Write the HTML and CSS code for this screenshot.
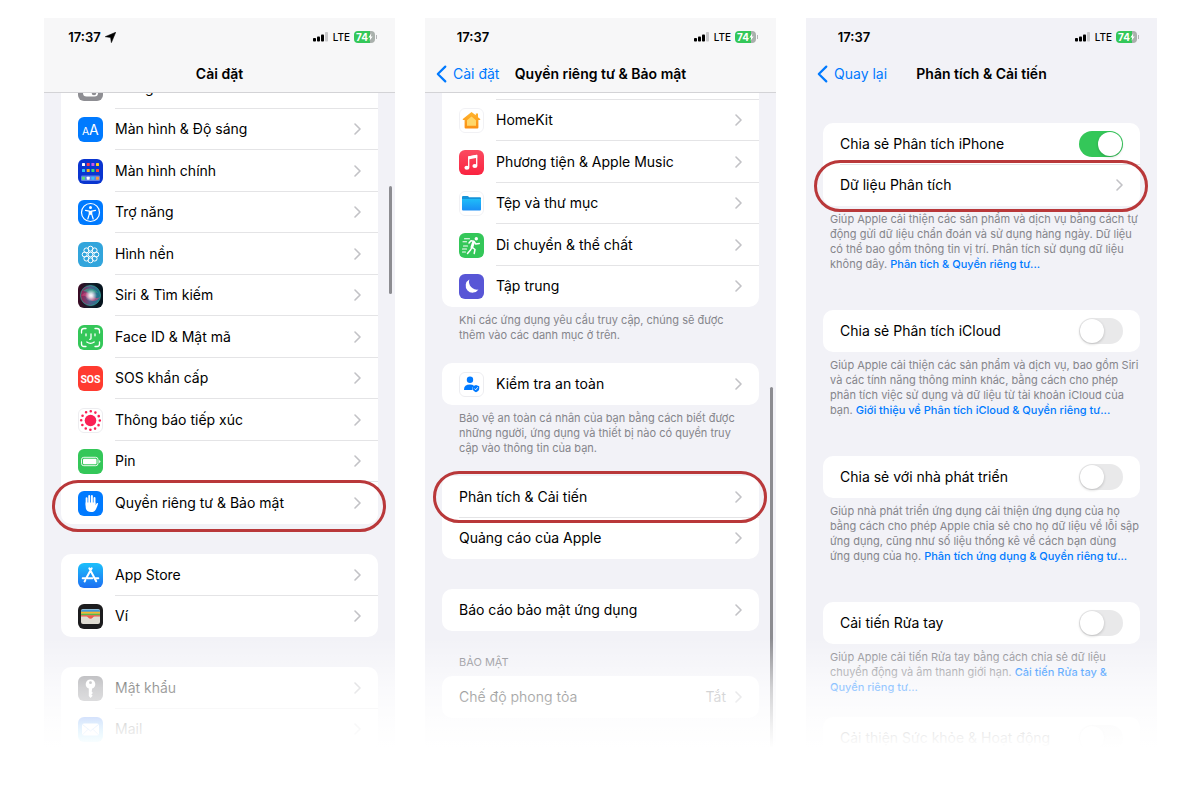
FILE: index.html
```html
<!DOCTYPE html>
<html lang="vi">

<head>
  <meta charset="UTF-8">
  <meta name="viewport" content="width=device-width, initial-scale=1">
  <title>Cài đặt</title>
  <link rel="stylesheet" href="styles.css">
</head>

<body>
  <!-- shared icons -->
  <svg class="defs" width="0" height="0" aria-hidden="true">
    <defs>
      <linearGradient id="store" x1="0" y1="0" x2="0" y2="1">
        <stop offset="0" stop-color="#1cc0fb" />
        <stop offset="1" stop-color="#1d6ff2" />
      </linearGradient>
      <linearGradient id="mail" x1="0" y1="0" x2="0" y2="1">
        <stop offset="0" stop-color="#1d62f0" />
        <stop offset="1" stop-color="#19d0fb" />
      </linearGradient>
      <linearGradient id="home" x1="0" y1="0" x2="0" y2="1">
        <stop offset="0" stop-color="#ffb52e" />
        <stop offset="1" stop-color="#fb8f14" />
      </linearGradient>
      <linearGradient id="music" x1="0" y1="0" x2="0" y2="1">
        <stop offset="0" stop-color="#fb4a60" />
        <stop offset="1" stop-color="#fa2340" />
      </linearGradient>
      <linearGradient id="folder" x1="0" y1="0" x2="0" y2="1">
        <stop offset="0" stop-color="#1fbdf8" />
        <stop offset="1" stop-color="#1a8ef5" />
      </linearGradient>
      <linearGradient id="siri" x1="0" y1="0" x2="1" y2="0">
        <stop offset="0" stop-color="#c01f5c" />
        <stop offset="0.45" stop-color="#6f6fa8" />
        <stop offset="1" stop-color="#14a0b4" />
      </linearGradient>
      <linearGradient id="siri-bg" x1="0" y1="0" x2="1" y2="0">
        <stop offset="0" stop-color="#3a0a24" />
        <stop offset="0.5" stop-color="#12202c" />
        <stop offset="1" stop-color="#04121c" />
      </linearGradient>
      <radialGradient id="glow">
        <stop offset="0" stop-color="#fff" />
        <stop offset="0.3" stop-color="#fff" stop-opacity="0.8" />
        <stop offset="1" stop-color="#fff" stop-opacity="0" />
      </radialGradient>
    </defs>
    <symbol id="chevron" viewBox="0 0 7 12">
      <path d="M1 1l5 5-5 5" fill="none" stroke="#c2c2c6" stroke-width="1.6" stroke-linecap="round" stroke-linejoin="round" />
    </symbol>
    <symbol id="back" viewBox="0 0 11 18">
      <path d="M9.3 1.6L1.8 9l7.5 7.4" fill="none" stroke="#007aff" stroke-width="2.2" stroke-linecap="round" stroke-linejoin="round" />
    </symbol>
    <symbol id="signal" viewBox="0 0 16 10">
      <rect x="0" y="6" width="3" height="3.5" rx="0.8" />
      <rect x="4" y="4.5" width="3" height="5" rx="0.8" />
      <rect x="8" y="2.5" width="3" height="7" rx="0.8" />
      <rect x="12" y="0" width="3" height="9.5" rx="0.8" fill="#c8c8ca" />
    </symbol>
    <symbol id="bolt" viewBox="0 0 6 9">
      <path d="M4 0L0.4 5h2.2L1.8 9l3.8-5.2H3.4z" fill="#fff" />
    </symbol>
  </svg>

  <main class="screens">

    <!-- Cài đặt -->
    <section class="screen">
      <header class="topbar">
        <div class="status">
          <div class="clock">17:37
            <svg width="11" height="11" viewBox="0 0 11 11"><path d="M10.7 0.3L6.4 10.6 5.6 5.4 0.3 4.7z" stroke="#000" stroke-width="0.6" stroke-linejoin="round" /></svg>
          </div>
          <div class="signal">
            <svg width="16" height="10"><use href="#signal" /></svg>
            <span class="lte">LTE</span>
            <span class="battery">74<svg width="5" height="8"><use href="#bolt" /></svg></span>
          </div>
        </div>
        <div class="navbar">
          <h1 class="title">Cài đặt</h1>
        </div>
      </header>
      <div class="content">
        <nav class="card card-scrolled">
          <a class="row" href="#">
            <svg class="icon" viewBox="0 0 25 25"><rect width="25" height="25" rx="6" fill="#8e8e93" /><rect x="5" y="13.500" width="15" height="7" rx="3.500" fill="#fff" /><circle cx="16" cy="17" r="2.300" fill="#8e8e93" /></svg>
            <span class="row-body">Trung tâm điều khiển</span>
          </a>
          <a class="row" href="#">
            <svg class="icon" viewBox="0 0 25 25"><rect width="25" height="25" rx="6" fill="#007aff" /><text x="4" y="18" font-family="Inter, sans-serif" font-size="10.500" fill="#fff">A</text><text x="11" y="18" font-family="Inter, sans-serif" font-size="14" fill="#fff">A</text></svg>
            <span class="row-body">Màn hình &amp; Độ sáng<svg class="chevron"><use href="#chevron" /></svg></span>
          </a>
          <a class="row" href="#">
            <svg class="icon" viewBox="0 0 25 25">
              <rect width="25" height="25" rx="6" fill="#0a35d0" />
              <rect x="3" y="16.500" width="19" height="5.500" rx="1.200" fill="#5f80e6" />
              <g fill="#fff"><rect x="4" y="4" width="3" height="3" rx=".6" /><rect x="8.700" y="17.700" width="3" height="3" rx=".6" /></g>
              <rect x="8.700" y="4" width="3" height="3" rx=".6" fill="#ff3b4e" />
              <rect x="13.400" y="4" width="3" height="3" rx=".6" fill="#c857e8" />
              <rect x="18" y="4" width="3" height="3" rx=".6" fill="#ffd21c" />
              <rect x="4" y="10" width="3" height="3" rx=".6" fill="#2fc5f5" />
              <rect x="8.700" y="10" width="3" height="3" rx=".6" fill="#ffb01c" />
              <rect x="13.400" y="10" width="3" height="3" rx=".6" fill="#3fdc6b" />
              <rect x="18" y="10" width="3" height="3" rx=".6" fill="#ff4a3b" />
              <rect x="4" y="17.700" width="3" height="3" rx=".6" fill="#59e07c" />
              <rect x="13.400" y="17.700" width="3" height="3" rx=".6" fill="#35c3f8" />
              <rect x="18" y="17.700" width="3" height="3" rx=".6" fill="#f79a3c" />
            </svg>
            <span class="row-body">Màn hình chính<svg class="chevron"><use href="#chevron" /></svg></span>
          </a>
          <a class="row" href="#">
            <svg class="icon" viewBox="0 0 25 25"><rect width="25" height="25" rx="6" fill="#007aff" /><circle cx="12.500" cy="12.500" r="9" fill="none" stroke="#fff" stroke-width="1.200" /><circle cx="12.500" cy="7.600" r="1.500" fill="#fff" /><path d="M7.500 10.300l3.800.8v3L9.800 19M17.500 10.300l-3.800.8v3l1.500 4.900" fill="none" stroke="#fff" stroke-width="1.200" stroke-linecap="round" stroke-linejoin="round" /><path d="M11 10.800h3v4h-3z" fill="#fff" /></svg>
            <span class="row-body">Trợ năng<svg class="chevron"><use href="#chevron" /></svg></span>
          </a>
          <a class="row" href="#">
            <svg class="icon" viewBox="0 0 25 25">
              <rect width="25" height="25" rx="6" fill="#32a5dc" />
              <g fill="none" stroke="#fff" stroke-width="1">
                <circle cx="12.500" cy="12.500" r="2.300" />
                <circle cx="12.500" cy="6.700" r="2.500" /><circle cx="16.600" cy="8.400" r="2.500" />
                <circle cx="18.300" cy="12.500" r="2.500" /><circle cx="16.600" cy="16.600" r="2.500" />
                <circle cx="12.500" cy="18.300" r="2.500" /><circle cx="8.400" cy="16.600" r="2.500" />
                <circle cx="6.700" cy="12.500" r="2.500" /><circle cx="8.400" cy="8.400" r="2.500" />
              </g>
            </svg>
            <span class="row-body">Hình nền<svg class="chevron"><use href="#chevron" /></svg></span>
          </a>
          <a class="row" href="#">
            <svg class="icon" viewBox="0 0 25 25"><rect width="25" height="25" rx="6" fill="url(#siri-bg)" /><circle cx="12.500" cy="12.500" r="10" fill="url(#siri)" opacity=".75" /><circle cx="12.500" cy="12.500" r="10" fill="none" stroke="#3aa39a" stroke-width=".8" /><path d="M3 13c4-5 7-4 10-1s6 4 9 2c-3 5-8 5-11 2s-5-4-8-3z" fill="#d8447c" opacity=".6" /><path d="M5 8c5-4 12-3 15 2-4-1-6 0-8 2-2-3-4-4-7-4z" fill="#35b38c" opacity=".6" /><circle cx="13" cy="12.500" r="6" fill="url(#glow)" /></svg>
            <span class="row-body">Siri &amp; Tìm kiếm<svg class="chevron"><use href="#chevron" /></svg></span>
          </a>
          <a class="row" href="#">
            <svg class="icon" viewBox="0 0 25 25"><rect width="25" height="25" rx="6" fill="#34c759" /><g fill="none" stroke="#fff" stroke-width="1.300" stroke-linecap="round"><path d="M3.500 8V6Q3.500 3.500 6 3.500h2M17 3.500h2q2.500 0 2.500 2.500v2M21.500 17v2q0 2.500-2.500 2.500h-2M8 21.500H6q-2.500 0-2.500-2.500v-2" /><path d="M8 9v1.800M17 9v1.800M13 9v4.500q0 .8-1.300.8M8.800 17q3.700 2.600 7.400 0" /></g></svg>
            <span class="row-body">Face ID &amp; Mật mã<svg class="chevron"><use href="#chevron" /></svg></span>
          </a>
          <a class="row" href="#">
            <svg class="icon" viewBox="0 0 25 25"><rect width="25" height="25" rx="6" fill="#ff3b30" /><text x="12.500" y="16.700" text-anchor="middle" font-family="Roboto, sans-serif" font-size="10.500" font-weight="700" fill="#fff">SOS</text></svg>
            <span class="row-body">SOS khẩn cấp<svg class="chevron"><use href="#chevron" /></svg></span>
          </a>
          <a class="row" href="#">
            <svg class="icon" viewBox="0 0 25 25"><rect x=".5" y=".5" width="24" height="24" rx="5.500" fill="#fff" stroke="#ededf0" /><circle cx="12.500" cy="12.500" r="5.800" fill="#fb2055" /><circle cx="12.500" cy="12.500" r="9.300" fill="none" stroke="#fb2055" stroke-width="2.600" stroke-linecap="round" stroke-dasharray="0 4.869" /></svg>
            <span class="row-body">Thông báo tiếp xúc<svg class="chevron"><use href="#chevron" /></svg></span>
          </a>
          <a class="row" href="#">
            <svg class="icon" viewBox="0 0 25 25"><rect width="25" height="25" rx="6" fill="#34c759" /><rect x="3.500" y="8.300" width="16.500" height="8.400" rx="2.300" fill="none" stroke="#fff" stroke-width=".9" /><rect x="5" y="9.800" width="13.500" height="5.400" rx="1" fill="#fff" /><path d="M21.200 11v3q1.200-.5 1.200-1.500t-1.200-1.500z" fill="#fff" /></svg>
            <span class="row-body">Pin<svg class="chevron"><use href="#chevron" /></svg></span>
          </a>
          <a class="row" href="#">
            <svg class="icon" viewBox="0 0 25 25"><rect width="25" height="25" rx="6" fill="#007aff" /><path d="M8.600 14V7.200M11.200 12V5M13.900 12V5M16.500 13V7" fill="none" stroke="#fff" stroke-width="1.900" stroke-linecap="round" /><path d="M7.650 11.500h9.800v2.700l1-1.700q.8-1 1.700-.3-.7 3.200-2.200 6-1.500 2.900-4.800 2.900-5.500 0-5.500-5.600z" fill="#fff" /></svg>
            <span class="row-body">Quyền riêng tư &amp; Bảo mật<svg class="chevron"><use href="#chevron" /></svg></span>
            <span class="ring ring-low"></span>
          </a>
        </nav>

        <nav class="card">
          <a class="row" href="#">
            <svg class="icon" viewBox="0 0 25 25"><rect width="25" height="25" rx="6" fill="url(#store)" /><path d="M11.300 5.300l6.900 13M13.700 5.300L8.200 15.200M7.300 17.200l-.7 1.200M4.700 15.300h9.600M17.200 15.300h3.100" fill="none" stroke="#fff" stroke-width="2" stroke-linecap="round" /></svg>
            <span class="row-body">App Store<svg class="chevron"><use href="#chevron" /></svg></span>
          </a>
          <a class="row" href="#">
            <svg class="icon" viewBox="0 0 25 25"><rect width="25" height="25" rx="6" fill="#1c1c1e" /><rect x="3" y="5" width="19" height="15" rx="2" fill="#dfdcd3" /><path d="M3 8V7q0-1.500 1.500-1.500h16Q22 5.500 22 7v1z" fill="#3f9bd9" /><path d="M3 7.700h19v2H3z" fill="#f6b42c" /><path d="M3 9.600h19v2H3z" fill="#5cb947" /><path d="M3 11.300h19v1.300h-5.500q-1 0-1.600.9-2.400 2.400-4.800 0-.6-.9-1.600-.9H3z" fill="#ee5b4f" /></svg>
            <span class="row-body">Ví<svg class="chevron"><use href="#chevron" /></svg></span>
          </a>
        </nav>

        <nav class="card">
          <a class="row" href="#">
            <svg class="icon" viewBox="0 0 25 25"><rect width="25" height="25" rx="6" fill="#8e8e93" /><path d="M12.500 3.500a4.700 4.700 0 0 0-1.700 9.100V20l1.700 2 2.200-2.200-1.300-1.300 1.500-1.600-1.200-1.300.5-3A4.700 4.700 0 0 0 12.500 3.500z" fill="#fff" /><circle cx="12.500" cy="6.700" r="1.400" fill="#8e8e93" /></svg>
            <span class="row-body">Mật khẩu<svg class="chevron"><use href="#chevron" /></svg></span>
          </a>
          <a class="row" href="#">
            <svg class="icon" viewBox="0 0 25 25"><rect width="25" height="25" rx="6" fill="url(#mail)" /><rect x="4" y="6.500" width="17" height="12" rx="2" fill="#fff" /><path d="M4.500 7.500l8 6.500 8-6.500M4.500 17.800l5.500-5.500M20.500 17.800L15 12.300" fill="none" stroke="#3c8ff5" stroke-width=".8" /></svg>
            <span class="row-body">Mail<svg class="chevron"><use href="#chevron" /></svg></span>
          </a>
        </nav>
      </div>
      <div class="thumb thumb-settings"></div>
    </section>

    <!-- Quyền riêng tư & Bảo mật -->
    <section class="screen">
      <header class="topbar">
        <div class="status">
          <div class="clock">17:37</div>
          <div class="signal">
            <svg width="16" height="10"><use href="#signal" /></svg>
            <span class="lte">LTE</span>
            <span class="battery">74<svg width="5" height="8"><use href="#bolt" /></svg></span>
          </div>
        </div>
        <div class="navbar">
          <a class="back" href="#"><svg width="11" height="18"><use href="#back" /></svg>Cài đặt</a>
          <h1 class="title">Quyền riêng tư &amp; Bảo mật</h1>
        </div>
      </header>
      <div class="content">
        <nav class="card card-scrolled-more">
          <div class="row">
            <span class="icon"></span>
            <span class="row-body"></span>
          </div>
          <a class="row" href="#">
            <svg class="icon" viewBox="0 0 25 25"><rect x=".5" y=".5" width="24" height="24" rx="5.500" fill="#fff" stroke="#f1f1f4" /><path d="M12.500 4L3.800 11q-.4.800.5 1h1.300v7.500q0 1 1 1h11.800q1 0 1-1V12h1.300q.9-.2.500-1l-2.200-1.800V5.500h-2.200v1.700z" fill="url(#home)" /><path d="M12.500 8.500L8 12.200v5.500h9v-5.500z" fill="#ffd76a" /></svg>
            <span class="row-body">HomeKit<svg class="chevron"><use href="#chevron" /></svg></span>
          </a>
          <a class="row" href="#">
            <svg class="icon" viewBox="0 0 25 25"><rect width="25" height="25" rx="6" fill="url(#music)" /><path d="M9.700 17.300V7l8-1.700v10.400" fill="none" stroke="#fff" stroke-width="1.300" stroke-linejoin="round" /><path d="M9.200 6.600l9-1.900v3l-9 1.900z" fill="#fff" /><ellipse cx="7.900" cy="17.700" rx="2.500" ry="2" fill="#fff" /><ellipse cx="15.900" cy="16" rx="2.500" ry="2" fill="#fff" /></svg>
            <span class="row-body">Phương tiện &amp; Apple Music<svg class="chevron"><use href="#chevron" /></svg></span>
          </a>
          <a class="row" href="#">
            <svg class="icon" viewBox="0 0 25 25"><rect x=".5" y=".5" width="24" height="24" rx="5.500" fill="#fff" stroke="#f1f1f4" /><path d="M3 7V6q0-1 1-1h4.500q.6 0 1 .5l.7.700H21q1 0 1 1V9H3z" fill="#1593d8" /><path d="M3 8h19v10.500q0 1-1 1H4q-1 0-1-1z" fill="url(#folder)" /></svg>
            <span class="row-body">Tệp và thư mục<svg class="chevron"><use href="#chevron" /></svg></span>
          </a>
          <a class="row" href="#">
            <svg class="icon" viewBox="0 0 25 25"><rect width="25" height="25" rx="6" fill="#34c759" /><circle cx="17.300" cy="5.700" r="1.700" fill="#fff" /><g fill="none" stroke="#fff" stroke-linecap="round" stroke-linejoin="round"><path d="M10 10l2-2.200 3 .5 1.800 2.700 3.500-.5M12.700 14.800L11.500 17l-3 3.500M13.500 14.500l2.500 2-.8 4" stroke-width="1.500" /><path d="M14.500 9.300l-1.600 4.800" stroke-width="2.800" /><path d="M5.500 5.700h5M4 8.700h3.500M4.500 13h4M3.500 16h4M3.500 19h3" stroke-width="1.100" /></g></svg>
            <span class="row-body">Di chuyển &amp; thể chất<svg class="chevron"><use href="#chevron" /></svg></span>
          </a>
          <a class="row" href="#">
            <svg class="icon" viewBox="0 0 25 25"><rect width="25" height="25" rx="6" fill="#5856d6" /><path d="M10.300 5.500a8 8 0 0 0 9.200 10 7 7 0 1 1-9.200-10z" fill="#fff" /></svg>
            <span class="row-body">Tập trung<svg class="chevron"><use href="#chevron" /></svg></span>
          </a>
        </nav>
        <p class="note">Khi các ứng dụng yêu cầu truy cập, chúng sẽ được<br>thêm vào các danh mục ở trên.</p>

        <nav class="card">
          <a class="row" href="#">
            <svg class="icon" viewBox="0 0 25 25"><rect x=".5" y=".5" width="24" height="24" rx="5.500" fill="#fff" stroke="#ededf0" /><circle cx="11" cy="7.800" r="3.200" fill="#007aff" /><path d="M5 17.500q0-5 6-5 2.300 0 3.800.9-1.700 1.300-1.300 4.600H5.500q-.5 0-.5-.5z" fill="#007aff" /><path d="M17 13l3.200 1.200v2.300q0 2.500-3.200 3.800-3.200-1.300-3.200-3.800v-2.300z" fill="#007aff" /><path d="M15.500 16.600l1.200 1.200 2-2.500" fill="none" stroke="#fff" stroke-width=".9" /></svg>
            <span class="row-body">Kiểm tra an toàn<svg class="chevron"><use href="#chevron" /></svg></span>
          </a>
        </nav>
        <p class="note">Bảo vệ an toàn cá nhân của bạn bằng cách biết được<br>những người, ứng dụng và thiết bị nào có quyền truy<br>cập vào thông tin của bạn.</p>

        <nav class="card">
          <a class="row" href="#">
            <span class="row-body">Phân tích &amp; Cải tiến<svg class="chevron"><use href="#chevron" /></svg></span>
            <span class="ring"></span>
          </a>
          <a class="row" href="#">
            <span class="row-body">Quảng cáo của Apple<svg class="chevron"><use href="#chevron" /></svg></span>
          </a>
        </nav>

        <nav class="card">
          <a class="row" href="#">
            <span class="row-body">Báo cáo bảo mật ứng dụng<svg class="chevron"><use href="#chevron" /></svg></span>
          </a>
        </nav>

        <h2 class="group-title">BẢO MẬT</h2>
        <nav class="card">
          <a class="row" href="#">
            <span class="row-body">Chế độ phong tỏa<span class="value">Tắt</span><svg class="chevron"><use href="#chevron" /></svg></span>
          </a>
        </nav>
      </div>
      <div class="thumb thumb-privacy"></div>
    </section>

    <!-- Phân tích & Cải tiến -->
    <section class="screen">
      <header class="topbar topbar-plain">
        <div class="status">
          <div class="clock">17:37</div>
          <div class="signal">
            <svg width="16" height="10"><use href="#signal" /></svg>
            <span class="lte">LTE</span>
            <span class="battery">74<svg width="5" height="8"><use href="#bolt" /></svg></span>
          </div>
        </div>
        <div class="navbar">
          <a class="back" href="#"><svg width="11" height="18"><use href="#back" /></svg>Quay lại</a>
          <h1 class="title">Phân tích &amp; Cải tiến</h1>
        </div>
      </header>
      <div class="content">
        <div class="card">
          <label class="row">
            <span class="row-body">Chia sẻ Phân tích iPhone<input class="toggle" type="checkbox" checked></span>
          </label>
          <a class="row" href="#">
            <span class="row-body">Dữ liệu Phân tích<svg class="chevron"><use href="#chevron" /></svg></span>
            <span class="ring"></span>
          </a>
        </div>
        <p class="note note-wide">Giúp Apple cải thiện các sản phẩm và dịch vụ bằng cách tự<br>động gửi dữ liệu chẩn đoán và sử dụng hàng ngày. Dữ liệu<br>có thể bao gồm thông tin vị trí. Phân tích sử dụng dữ liệu<br>không dây. <a href="#">Phân tích &amp; Quyền riêng tư...</a></p>

        <div class="card">
          <label class="row">
            <span class="row-body">Chia sẻ Phân tích iCloud<input class="toggle" type="checkbox"></span>
          </label>
        </div>
        <p class="note note-wide">Giúp Apple cải thiện các sản phẩm và dịch vụ, bao gồm Siri<br>và các tính năng thông minh khác, bằng cách cho phép<br>phân tích việc sử dụng và dữ liệu từ tài khoản iCloud của<br>bạn. <a href="#">Giới thiệu về Phân tích iCloud &amp; Quyền riêng tư...</a></p>

        <div class="card">
          <label class="row">
            <span class="row-body">Chia sẻ với nhà phát triển<input class="toggle" type="checkbox"></span>
          </label>
        </div>
        <p class="note note-wide">Giúp nhà phát triển ứng dụng cải thiện ứng dụng của họ<br>bằng cách cho phép Apple chia sẻ cho họ dữ liệu về lỗi sập<br>ứng dụng, cũng như số liệu thống kê về cách bạn dùng<br>ứng dụng của họ. <a href="#">Phân tích ứng dụng &amp; Quyền riêng tư...</a></p>

        <div class="card">
          <label class="row">
            <span class="row-body">Cải tiến Rửa tay<input class="toggle" type="checkbox"></span>
          </label>
        </div>
        <p class="note note-wide note-tight">Giúp Apple cải tiến Rửa tay bằng cách chia sẻ dữ liệu<br>chuyển động và âm thanh giới hạn. <a href="#">Cải tiến Rửa tay &amp;<br>Quyền riêng tư...</a></p>

        <div class="card">
          <label class="row">
            <span class="row-body">Cải thiện Sức khỏe &amp; Hoạt động<input class="toggle" type="checkbox"></span>
          </label>
        </div>
      </div>
    </section>

  </main>
</body>

</html>
```

FILE: styles.css
```css
* {
  box-sizing: border-box;
}

body {
  margin: 0;
  background: #fff;
  color: #000;
  font-family: Inter, "Noto Sans", sans-serif;
  font-size: 14px;
  line-height: 20px;
}

a {
  color: inherit;
  text-decoration: none;
}

.defs {
  position: absolute;
}

.screens {
  display: grid;
  grid-template-columns: repeat(3, 1fr);
  gap: 30px;
  height: 100vh;
  padding: 18px 43px 52px 44px;
}

.screen {
  position: relative;
  display: flex;
  flex-direction: column;
  min-width: 0;
  min-height: 0;
  overflow: hidden;
  background: #f2f2f7;
}

/* fade to white at the bottom of every screen */
.screen::after {
  content: "";
  position: absolute;
  left: 0;
  right: 0;
  bottom: 0;
  height: 110px;
  background: linear-gradient(rgba(255, 255, 255, 0), rgba(255, 255, 255, .6) 45%, rgba(255, 255, 255, .88) 80%, #fff);
  pointer-events: none;
}

/* top bar */
.topbar {
  flex: none;
  height: 75px;
  background: #f7f7f8;
  border-bottom: 1px solid #d3d3d6;
}

.topbar-plain {
  background: transparent;
  border-color: transparent;
}

.status {
  display: flex;
  justify-content: space-between;
  align-items: center;
  height: 38px;
  padding-right: 18px;
}

.clock {
  display: flex;
  justify-content: center;
  align-items: center;
  gap: 4px;
  width: 96px;
  font-size: 13px;
  font-weight: 600;
}

.signal {
  display: flex;
  align-items: center;
  gap: 4px;
}

.lte {
  font-size: 10px;
  font-weight: 500;
}

.battery {
  position: relative;
  display: flex;
  align-items: center;
  justify-content: center;
  width: 21px;
  height: 12px;
  margin-right: 2px;
  border-radius: 4px;
  background: linear-gradient(90deg, #34c759 74%, #a9b0ac 74%);
  color: #fff;
  font-size: 10px;
  font-weight: 700;
  line-height: 12px;
}

.battery::after {
  content: "";
  position: absolute;
  left: 22px;
  top: 4px;
  width: 1px;
  height: 4px;
  background: #b5b5b8;
}

.navbar {
  display: grid;
  grid-template-columns: 1fr auto 1fr;
  align-items: center;
  height: 36px;
}

.title {
  grid-column: 2;
  margin: 0;
  font-size: 14px;
  font-weight: 600;
}

.back {
  display: flex;
  align-items: center;
  gap: 6px;
  padding-left: 11px;
  color: #007aff;
  white-space: nowrap;
}

/* grouped lists */
.content {
  flex: 1;
  min-height: 0;
  padding: 0 17px;
  overflow: hidden;
}

.card {
  margin-top: 30px;
  border-radius: 10px;
  background: #fff;
}

.card-scrolled {
  margin-top: -26px;
}

.card-scrolled-more {
  margin-top: -35px;
}

.row {
  position: relative;
  display: flex;
  align-items: center;
  gap: 12px;
  height: 42px;
  padding-left: 17px;
}

.row:nth-child(even) {
  height: 41px;
}

.row-body {
  display: flex;
  flex: 1;
  align-items: center;
  align-self: stretch;
  padding-right: 17px;
  border-bottom: 1px solid #e4e4e6;
  white-space: nowrap;
}

.row:last-child .row-body {
  border-bottom-color: transparent;
}

.icon {
  flex: none;
  width: 25px;
  height: 25px;
}

.chevron {
  width: 7px;
  height: 12px;
  margin-left: auto;
}

.value {
  margin-left: auto;
  color: #8a8a8e;
}

.value + .chevron {
  margin-left: 9px;
}

.note {
  margin: 0;
  padding: 6px 0 20px 17px;
  color: #85858b;
  font-size: 11px;
  line-height: 15px;
  white-space: nowrap;
}

.note-wide {
  padding: 6px 0 38px 7px;
}

.note-tight {
  padding-bottom: 22px;
}

.note a {
  color: #007aff;
  font-weight: 500;
}

.group-title {
  margin: 24px 0 6px 17px;
  color: #85858b;
  font-size: 11px;
  font-weight: 400;
  line-height: 15px;
}

.note + .card,
.group-title + .card {
  margin-top: 0;
}

/* switch */
.toggle {
  position: relative;
  width: 44px;
  height: 26px;
  margin: 0 0 0 auto;
  border-radius: 13px;
  background: #e9e9ea;
  appearance: none;
}

.toggle::before {
  content: "";
  position: absolute;
  top: 1px;
  left: 1px;
  width: 24px;
  height: 24px;
  border-radius: 50%;
  background: #fff;
  box-shadow: 0 1px 3px rgba(0, 0, 0, .2);
}

.toggle:checked {
  background: #34c759;
}

.toggle:checked::before {
  left: 19px;
}

/* red ring round the row to tap */
.ring {
  position: absolute;
  top: -5px;
  left: -9px;
  right: -8px;
  height: 52px;
  border: 3px solid #b9383a;
  border-radius: 26px;
}

.ring-low {
  top: -2px;
}

/* scroll thumbs */
.thumb {
  position: absolute;
  right: 3px;
  width: 3px;
  border-radius: 2px;
  background: #8c8c91;
}

.thumb-settings {
  top: 168px;
  height: 108px;
}

.thumb-privacy {
  top: 369px;
  bottom: 0;
}
```
